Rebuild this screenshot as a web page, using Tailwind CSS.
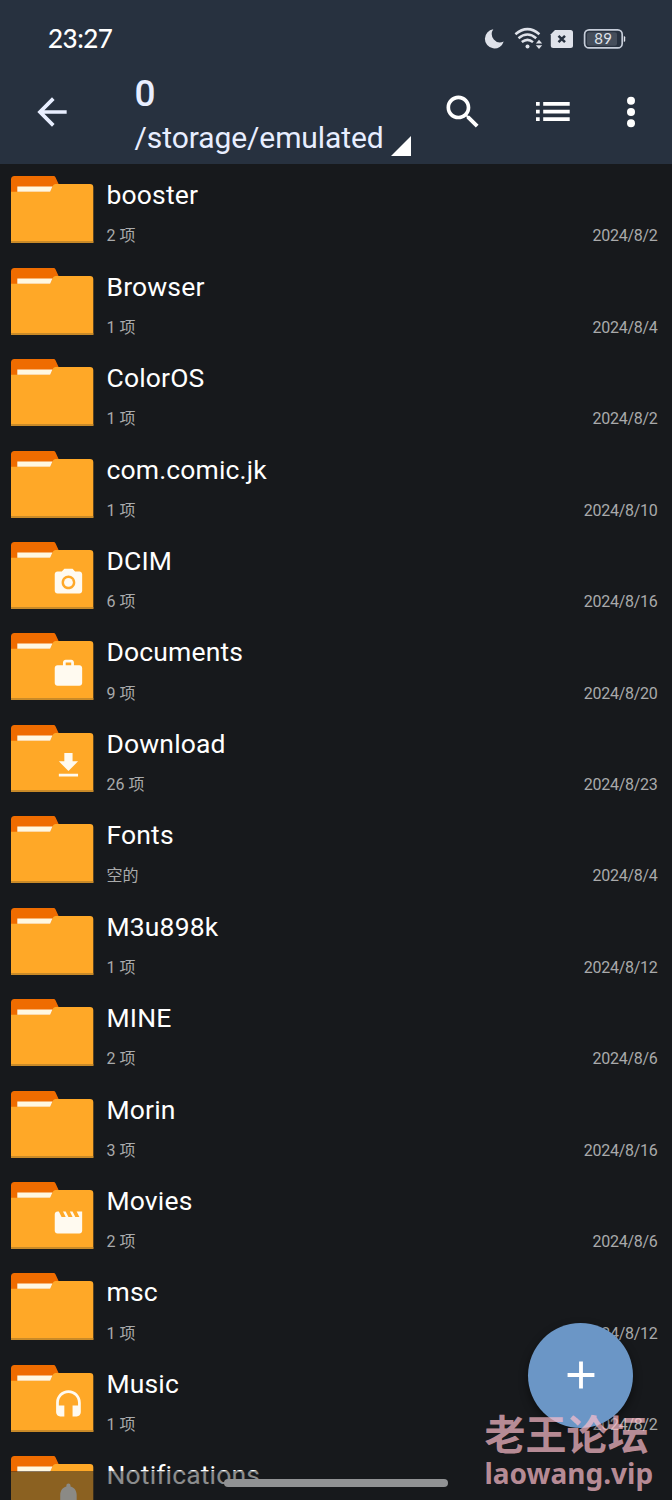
<!DOCTYPE html>
<html lang="zh-CN">
<head>
<meta charset="utf-8">
<title>/storage/emulated/0</title>
<script src="https://cdn.jsdelivr.net/npm/@tailwindcss/browser@4"></script>
</head>
<body class="bg-[#17191c]">
<svg class="hidden">
  <defs>
    <symbol id="folder" viewBox="0 0 83 67">
      <path fill="#ef6c00" d="M0 3.500Q0 0 3.500 0H42.500Q44 0 44.600 1.400L48.500 10V20H0Z"/>
      <path fill="#ffa827" d="M0 15.700H39.200L42 9.500Q42.800 7.900 44.500 7.900H79Q82.300 7.900 82.300 11.200V66.800H0Z"/>
      <path fill="#fff8e1" d="M6.300 10.400H41.500L39.200 15.700H6.300Z"/>
      <path fill="#c98a28" d="M0 65H82.300V66.900H0Z"/>
    </symbol>
    <symbol id="dcim" viewBox="0 0 24 24"><circle cx="12" cy="12" r="3.200"/><path d="M9 2 7.170 4H4c-1.100 0-2 .9-2 2v12c0 1.100.9 2 2 2h16c1.100 0 2-.9 2-2V6c0-1.100-.9-2-2-2h-3.170L15 2H9zm3 15c-2.760 0-5-2.240-5-5s2.240-5 5-5 5 2.240 5 5-2.240 5-5 5z"/></symbol>
    <symbol id="docs" viewBox="0 0 24 24"><path d="M20 6h-4V4c0-1.110-.89-2-2-2h-4c-1.110 0-2 .89-2 2v2H4c-1.110 0-2 .89-2 2v11c0 1.110.89 2 2 2h16c1.110 0 2-.89 2-2V8c0-1.110-.89-2-2-2zm-6 0h-4V4h4v2z"/></symbol>
    <symbol id="down" viewBox="0 0 24 24"><path d="M19 9h-4V3H9v6H5l7 7 7-7zM5 18v2h14v-2H5z"/></symbol>
    <symbol id="movie" viewBox="0 0 24 24"><path d="m18 4 2 4h-3l-2-4h-2l2 4h-3l-2-4H8l2 4H7L5 4H4c-1.100 0-1.990.9-1.990 2L2 18c0 1.100.9 2 2 2h16c1.100 0 2-.9 2-2V4h-4z"/></symbol>
    <symbol id="music" viewBox="0 0 24 24"><path d="M12 1c-4.970 0-9 4.030-9 9v7c0 1.660 1.340 3 3 3h3v-8H5v-2c0-3.870 3.130-7 7-7s7 3.130 7 7v2h-4v8h3c1.660 0 3-1.340 3-3v-7c0-4.970-4.030-9-9-9z"/></symbol>
    <symbol id="bell" viewBox="0 0 24 24"><path d="M12 22c1.100 0 2-.9 2-2h-4c0 1.100.89 2 2 2zm6-6v-5c0-3.070-1.640-5.640-4.500-6.320V4c0-.83-.67-1.500-1.500-1.500s-1.500.67-1.500 1.500v.68C7.630 5.360 6 7.920 6 11v5l-2 2v1h16v-1l-2-2z"/></symbol>
  </defs>
</svg>

<div class="relative h-[1500px] w-[672px] overflow-hidden bg-[#17191c] font-[Roboto,'Noto_Sans_CJK_SC',sans-serif]">
  <header class="flex h-[164px] flex-col bg-[#27313f]">
    <div class="flex h-[76px] items-center justify-between pl-[48px] pr-[46px] pt-[2px]">
      <span class="-mt-[2px] font-[Lato,sans-serif] text-[26px] font-medium leading-none tracking-[-0.500px] text-white">23:27</span>
      <svg class="h-[24px] w-[142px]" viewBox="484 27 142 24" fill="#dfe2ea">
        <path d="M493.300 29.300A9.600 9.600 0 1 0 503.700 41.500A8.300 8.300 0 0 1 493.300 29.300Z"/>
        <g fill="none" stroke="#dfe2ea" stroke-width="2.500">
          <path d="M515.400 34.200Q527.500 24 539.400 34.200"/>
          <path d="M518.500 38.200Q527.500 30.800 536.200 38.200"/>
          <path d="M521.800 42.100Q527.500 37.600 533 42.100"/>
        </g>
        <circle cx="527.500" cy="46.600" r="2"/>
        <path d="M535.800 43.500 539 39.800 542.200 43.500ZM535.800 45.200H542.200L539 48.900Z"/>
        <path d="M555 30H570.500Q573 30 573 32.500V45.500Q573 48 570.500 48H553.300Q550.800 48 550.800 45.500V34.200Z"/>
        <path d="M558.500 35.800 565 42.200M565 35.800 558.500 42.200" stroke="#27313f" stroke-width="2.500"/>
        <rect x="584.600" y="29.900" width="37.600" height="18" rx="4.500" fill="none" stroke="#c6cdd9" stroke-width="1.700"/>
        <rect x="587" y="32.200" width="30" height="13.500" rx="2" fill="#454e5b"/>
        <path d="M623.800 36.200H624.200Q625.200 36.200 625.200 37.200V40.800Q625.200 41.800 624.200 41.800H623.800Z"/>
        <text x="603.300" y="44.300" text-anchor="middle" font-family="Lato, sans-serif" font-size="15" letter-spacing=".3">89</text>
      </svg>
    </div>
    <div class="flex h-[88px]">
      <svg class="ml-[30px] mt-[14px] size-[44px] shrink-0" viewBox="0 0 24 24" fill="#e8eeff"><path d="M20 11H7.830l5.590-5.590L12 4l-8 8 8 8 1.410-1.410L7.830 13H20v-2z"/></svg>
      <div class="ml-[60.500px] flex w-[280px] flex-col">
        <span class="h-[40px] text-[37px] font-medium leading-[36px] text-[#e8eeff]">0</span>
        <div class="flex items-start gap-[7px]">
          <span class="whitespace-nowrap text-[30px] leading-[44px] tracking-[-0.080px] text-[#e8eeff]">/storage/emulated</span>
          <svg class="mt-[20px] size-[20px]" viewBox="0 0 20 20" fill="#fff"><path d="M20 0V20H0Z"/></svg>
        </div>
      </div>
      <svg class="ml-[26px] mt-[13.800px] size-[44px] shrink-0" viewBox="0 0 24 24" fill="#fff"><path d="M15.500 14h-.79l-.28-.27C15.410 12.590 16 11.110 16 9.500 16 5.910 13.090 3 9.500 3S3 5.910 3 9.500 5.910 16 9.500 16c1.610 0 3.090-.59 4.230-1.570l.27.28v.79l5 4.990L20.490 19l-4.990-5zm-6 0C7.010 14 5 11.990 5 9.500S7.010 5 9.500 5 14 7.010 14 9.500 11.990 14 9.500 14z"/></svg>
      <svg class="ml-[51.300px] mt-[26.300px] h-[20px] w-[34px] shrink-0" viewBox="0 0 34 20" fill="#fff"><path d="M0 0H3.700V3.700H0ZM7.200 0H33.700V3.700H7.200ZM0 7.700H3.700V11.400H0ZM7.200 7.700H33.700V11.400H7.200ZM0 15.200H3.700V18.900H0ZM7.200 15.200H33.700V18.900H7.200Z"/></svg>
      <svg class="ml-[57px] mt-[20px] h-[34px] w-[8px] shrink-0" viewBox="0 0 8 34" fill="#fff"><circle cx="4" cy="4.700" r="4"/><circle cx="4" cy="16" r="4"/><circle cx="4" cy="27.200" r="4"/></svg>
    </div>
  </header>

  <main id="list" class="flex flex-col"></main>

  <div class="absolute left-[528px] top-[1323px] flex size-[105px] items-center justify-center rounded-full bg-[#6b96c6] shadow-[0_4px_10px_rgba(0,0,0,0.45)]">
    <svg class="mb-[1px] size-[46px]" viewBox="0 0 24 24" fill="#fff"><path d="M19 13h-6v6h-2v-6H5v-2h6V5h2v6h6v2z"/></svg>
  </div>
  <div class="absolute inset-x-0 top-[1470.500px] h-[30px] bg-[#17191c]/50"></div>
  <div class="absolute left-[224px] top-[1479px] h-[8px] w-[224px] rounded-full bg-[#919294]"></div>
  <div class="absolute left-[484.500px] top-[1406px] flex flex-col whitespace-nowrap font-bold text-[#ffbfcc]/70">
    <span class="font-['Noto_Sans_CJK_SC',sans-serif] text-[41px] leading-[52px]">老王论坛</span>
    <span class="-mt-[2px] font-['Noto_Sans',sans-serif] text-[28px] leading-[34px]">laowang.vip</span>
  </div>
</div>

<script>
  const items = [
    ["booster", "2 项", "2024/8/2"],
    ["Browser", "1 项", "2024/8/4"],
    ["ColorOS", "1 项", "2024/8/2"],
    ["com.comic.jk", "1 项", "2024/8/10"],
    ["DCIM", "6 项", "2024/8/16", "dcim"],
    ["Documents", "9 项", "2024/8/20", "docs"],
    ["Download", "26 项", "2024/8/23", "down"],
    ["Fonts", "空的", "2024/8/4"],
    ["M3u898k", "1 项", "2024/8/12"],
    ["MINE", "2 项", "2024/8/6"],
    ["Morin", "3 项", "2024/8/16"],
    ["Movies", "2 项", "2024/8/6", "movie"],
    ["msc", "1 项", "2024/8/12"],
    ["Music", "1 项", "2024/8/2", "music"],
    ["Notifications", "", "", "bell"]
  ];
  document.getElementById("list").innerHTML = items.map(([name, count, date, badge]) => `
    <div class="flex h-[91.430px] shrink-0 pl-[11px] pr-[14.500px] pt-[12.300px]">
      <svg class="h-[67px] w-[83px] shrink-0" viewBox="0 0 83 67">
        <use href="#folder" width="83" height="67"/>
        ${badge ? `<use href="#${badge}" x="41" y="24" width="32.900" height="32.900" fill="#fffaf0"/>` : ""}
      </svg>
      <div class="ml-[12.500px] flex flex-1 flex-col">
        <span class="h-[38px] whitespace-nowrap text-[26.500px] leading-[37px] tracking-[0.150px] text-white">${name}</span>
        <div class="mt-[10.200px] flex h-[24px] items-center justify-between text-[16px] leading-[24px] text-[#a9aaab]">
          <span>${count}</span><span class="tracking-[-0.280px]">${date}</span>
        </div>
      </div>
    </div>`).join("");
</script>
</body>
</html>
